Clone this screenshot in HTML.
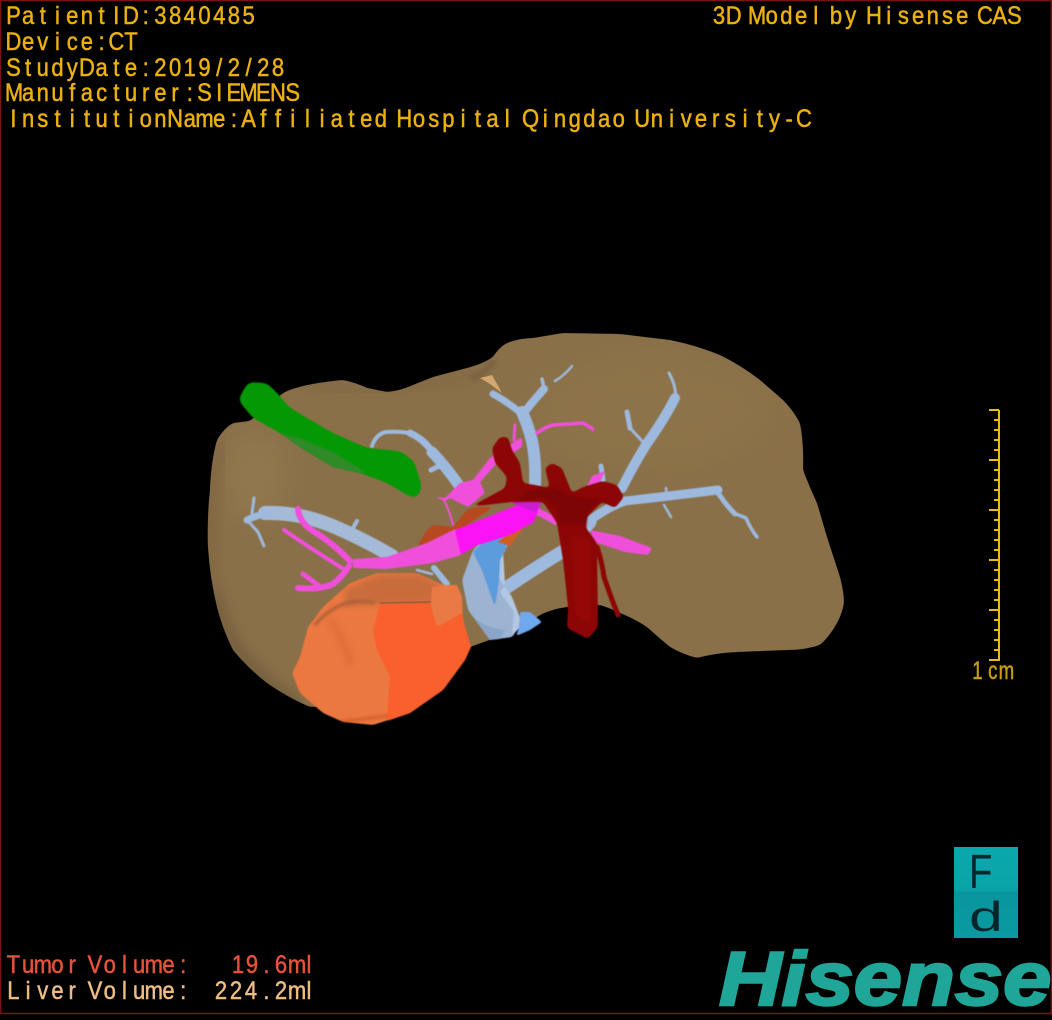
<!DOCTYPE html>
<html><head><meta charset="utf-8"><title>3D Model</title>
<style>
html,body{margin:0;padding:0;background:#000;width:1052px;height:1020px;overflow:hidden}
svg{display:block}
text{font-family:"Liberation Sans",sans-serif;white-space:pre}
.t{font-size:22px;text-anchor:middle;fill:#ecb10c;stroke:#ecb10c;stroke-width:.45}
</style></head><body>
<svg width="1052" height="1020" viewBox="0 0 1052 1020" xmlns="http://www.w3.org/2000/svg">
<defs>
<filter id="b1" color-interpolation-filters="sRGB" x="-30%" y="-30%" width="160%" height="160%"><feGaussianBlur stdDeviation="1.2"/></filter>
<filter id="b3" color-interpolation-filters="sRGB" x="-30%" y="-30%" width="160%" height="160%"><feGaussianBlur stdDeviation="3"/></filter>
<filter id="b6" color-interpolation-filters="sRGB" x="-30%" y="-30%" width="160%" height="160%"><feGaussianBlur stdDeviation="6"/></filter>
<filter id="b14" color-interpolation-filters="sRGB" x="-40%" y="-40%" width="180%" height="180%"><feGaussianBlur stdDeviation="14"/></filter>
<filter id="s" color-interpolation-filters="sRGB" x="-5%" y="-5%" width="110%" height="110%"><feGaussianBlur stdDeviation=".45"/></filter>
<filter id="r4" color-interpolation-filters="sRGB" x="-5%" y="-5%" width="110%" height="110%"><feGaussianBlur stdDeviation="4"/><feComponentTransfer><feFuncA type="linear" slope="10" intercept="-4.5"/></feComponentTransfer></filter>
<filter id="r2" color-interpolation-filters="sRGB" x="-10%" y="-10%" width="120%" height="120%"><feGaussianBlur stdDeviation="2"/><feComponentTransfer><feFuncA type="linear" slope="8" intercept="-3.5"/></feComponentTransfer></filter>
<filter id="r1" color-interpolation-filters="sRGB" x="-10%" y="-10%" width="120%" height="120%"><feGaussianBlur stdDeviation="1"/><feComponentTransfer><feFuncA type="linear" slope="6" intercept="-2.4"/></feComponentTransfer></filter>
<clipPath id="lc"><path d="M233 423L250 421L283 393Q300 384 343 380Q357 383 367 388L387 392Q400 391 413 385L433 377L467 368Q483 364 493 357Q499 347 507 343Q520 338 533 338L563 333L620 334L670 340Q695 345 720 355Q742 366 760 380L783 400Q793 410 800 423Q804 445 803 470Q810 488 817 503L827 537L840 577Q844 592 844 603Q842 614 837 623Q830 636 820 645Q805 650 787 650L737 652Q715 653 697 658Q682 654 670 647Q658 637 647 627Q633 618 620 613Q610 608 600 605Q582 604 567 607Q552 609 540 615L517 630L470 647L420 700L310 707Q287 697 267 683Q248 668 233 650Q223 630 217 607Q210 578 208 547Q207 518 210 490Q211 462 217 440Q224 428 233 423Z"/></clipPath>
<clipPath id="tc"><path d="M350 583L377 573L417 573L443 585L457 585L462 597L463 623L470 647L465 660L443 690L410 713L373 725L343 722L323 713L300 693L292 673L300 657L308 627L323 607Z"/></clipPath>
<linearGradient id="g1" x1="0" y1="0" x2="0" y2="1"><stop offset="0" stop-color="#0aa8ad"/><stop offset=".47" stop-color="#0aa4a8"/><stop offset=".5" stop-color="#0a959e"/><stop offset="1" stop-color="#0a9aa2"/></linearGradient>
</defs>

<rect width="1052" height="1020" fill="#000"/>
<rect x="0.5" y="0.5" width="1051" height="1013" fill="none" stroke="#7a1414" stroke-width="1.6"/>

<!-- liver -->
<path filter="url(#r2)" d="M233 423L250 421L283 393Q300 384 343 380Q357 383 367 388L387 392Q400 391 413 385L433 377L467 368Q483 364 493 357Q499 347 507 343Q520 338 533 338L563 333L620 334L670 340Q695 345 720 355Q742 366 760 380L783 400Q793 410 800 423Q804 445 803 470Q810 488 817 503L827 537L840 577Q844 592 844 603Q842 614 837 623Q830 636 820 645Q805 650 787 650L737 652Q715 653 697 658Q682 654 670 647Q658 637 647 627Q633 618 620 613Q610 608 600 605Q582 604 567 607Q552 609 540 615L517 630L470 647L420 700L310 707Q287 697 267 683Q248 668 233 650Q223 630 217 607Q210 578 208 547Q207 518 210 490Q211 462 217 440Q224 428 233 423Z" fill="#8a7049"/>
<g clip-path="url(#lc)">
  <ellipse cx="255" cy="475" rx="30" ry="45" fill="#92784f" filter="url(#b14)"/>
  <ellipse cx="650" cy="410" rx="120" ry="55" fill="#8d7349" filter="url(#b14)"/>
  <path d="M214 590Q225 660 300 705" fill="none" stroke="#6f5a3a" stroke-width="10" filter="url(#b6)"/>
  <path d="M222 440Q207 500 212 590" fill="none" stroke="#7b6441" stroke-width="8" filter="url(#b6)"/>
  <path d="M470 378Q482 378 494 360" fill="none" stroke="#6f5a39" stroke-width="4" filter="url(#b3)"/>
  <path d="M300 385Q400 395 470 372" fill="none" stroke="#7f6843" stroke-width="8" filter="url(#b6)"/>
</g>
<path d="M480 378L492 375L502 393L490 384Z" fill="#d2a870"/>

<g filter="url(#s)">
<!-- blue veins -->
<g fill="none" stroke="#9db9de" stroke-linecap="round" stroke-linejoin="round">
  <path d="M587 523Q605 508 625 501Q670 496 718 490" stroke-width="9"/>
  <path d="M716 490Q726 505 735 514" stroke-width="5"/>
  <path d="M736 514L746 518Q750 528 757 537" stroke-width="3.5"/>
  <path d="M667 497L666 488M664 505L671 517" stroke-width="2.5"/>
  <path d="M622 488Q635 462 648 442Q665 418 675 398" stroke-width="10"/>
  <path d="M676 400Q676 385 669 373" stroke-width="3"/>
  <path d="M643 442L630 428" stroke-width="3"/>
  <path d="M630 428L627 412" stroke-width="5"/>
  <path d="M603 480L601 466" stroke-width="5"/>
  <path d="M535 485Q536 460 532 441Q528 425 522 412" stroke-width="12"/>
  <path d="M522 414Q508 402 493 394" stroke-width="7"/>
  <path d="M523 414Q534 400 544 389" stroke-width="8"/>
  <path d="M544 388L542 379" stroke-width="3.5"/>
  <path d="M555 381Q565 375 572 366" stroke-width="2.5"/>
  <path d="M506 588Q535 568 565 550L590 522" stroke-width="13"/>
  <path d="M372 446Q376 434 386 432Q402 431 413 434" stroke-width="4"/>
  <path d="M410 433Q425 440 433 453" stroke-width="7"/>
  <path d="M432 452Q447 468 458 484" stroke-width="11"/>
  <path d="M431 470L443 464" stroke-width="5"/>
  <path d="M265 513Q300 512 335 527Q365 540 392 556" stroke="#a4bad6" stroke-width="14"/>
  <path d="M247 520Q257 515 268 513" stroke-width="7"/>
  <path d="M249 522L258 532L264 546" stroke-width="3"/>
  <path d="M252 513L254 498" stroke-width="3"/>
  <path d="M353 528L357 521" stroke-width="4"/>
  <path d="M417 570L432 574" stroke-width="2.5"/>
  <path d="M434 568L447 584" stroke-width="6"/>
</g>

<!-- IVC -->
<path filter="url(#r2)" d="M473 550L462 580L468 610L490 640L513 637L520 620L512 597L498 577L502 557L512 537L497 535L480 543Z" fill="#9cb3d2"/>
<path d="M468 610Q480 628 505 630L500 639L490 640Z" fill="#8ba5c8"/>
<path filter="url(#r1)" d="M503 550Q497 565 498 577L512 597L520 618L519 628L512 636L514 612L500 592L505 585Z" fill="#b2c7e3"/>
<path filter="url(#r1)" d="M520 612L530 612L542 622L530 630L516 636L520 625Z" fill="#6fa8ee"/>
<path filter="url(#r1)" d="M480 545L473 552L482 570L495 607L499 580L500 560L510 540L497 535Z" fill="#5c9bdc"/>

<!-- orange under portal -->
<path filter="url(#r1)" d="M417 546L427 530L433 525L453 527L467 510L477 507L493 507L460 530L427 543Z" fill="#b8481f"/>
<path d="M498 542L518 525L522 530L510 546Z" fill="#cf5f25"/>

<!-- pink -->
<g fill="none" stroke="#f04fdc" stroke-linecap="round" stroke-linejoin="round">
  <path d="M298 509Q299 522 313 531Q333 543 350 561" stroke-width="6"/>
  <path d="M284 530Q313 550 342 568" stroke-width="4"/>
  <path d="M298 588Q320 590 333 584Q343 576 349 566" stroke-width="6"/>
  <path d="M303 574L318 585" stroke-width="5"/>
  <path d="M444 500Q450 512 453 525" stroke-width="2"/>
  <path d="M514 440L515 425" stroke-width="3"/>
  <path d="M537 433Q545 427 553 425L583 423L593 429" stroke-width="3.5"/>
</g>
<path filter="url(#r1)" d="M430 496L445 498L460 483L473 480L490 458L522 437L522 447L497 463L480 482L485 493L468 507L450 498L445 501Z" fill="#f04fdc"/>
<path filter="url(#r1)" d="M537 507L555 517L557 526L535 514Z" fill="#f04fdc"/>
<path filter="url(#r1)" d="M590 530L620 536L652 548L648 555L625 552L595 542Z" fill="#f04fdc"/>
<path filter="url(#r1)" d="M353 559L387 557L427 543L453 530L461 528L461 555L433 563L387 569L353 568Z" fill="#ef4fdb"/>
<path filter="url(#r1)" d="M455 530L530 500L540 505L534 522L510 535L475 546L461 555Z" fill="#fb12f5"/>
<path d="M512 503L528 485L542 502L535 512Z" fill="#c81fd4"/>
<path d="M592 476L605 471L600 482L585 490Z" fill="#f04fdc"/>

<!-- dark red -->
<path filter="url(#r2)" d="M492 448L500 437L508 437L512 450L520 463L523 483L535 485L550 488L545 468L552 463L562 468L572 493L583 487L603 481L617 485L624 497L615 508L602 502L587 517L586 528L597 543L598 627L588 639L567 628L568 607L563 560L557 523L543 502L512 502L468 507L483 500L505 488L507 477L495 463Z" fill="#8d0606"/>
<path d="M515 502L543 497L557 510L560 522L586 526L587 513L600 500L575 497L553 488L530 490Z" fill="#7d0505" filter="url(#b1)"/>
<path d="M572 535L590 540L590 622L575 615Z" fill="#960808" filter="url(#b1)"/>
<path d="M597 547Q602 562 604 577Q610 595 618 615" fill="none" stroke="#8d0606" stroke-width="5" stroke-linecap="round"/>

<!-- green -->
<path filter="url(#r4)" d="M238 400L248 382L267 383L278 394L290 408L333 433L367 448L400 451L414 461L422 487L417 499L407 495L387 483L360 473L333 467L300 447L280 433L253 418Z" fill="#049804"/>
<path d="M280 433L300 438L333 452L367 473L360 473L333 467L300 447Z" fill="#2f8a28" filter="url(#s)"/>

<!-- tumor -->
<path filter="url(#r2)" d="M350 583L377 573L417 573L443 585L457 585L462 597L463 623L470 647L465 660L443 690L410 713L373 725L343 722L323 713L300 693L292 673L300 657L308 627L323 607Z" fill="#ea7840"/>
<g clip-path="url(#tc)">
  <path d="M345 590L380 574L420 574L440 585L432 603L380 604L345 607Z" fill="#c96c3c" filter="url(#b3)"/>
  <path d="M315 625Q340 595 375 603" fill="none" stroke="#ad5f36" stroke-width="3" filter="url(#b1)"/>
  <path d="M380 603L431 602" stroke="#7a4a30" stroke-width="1" fill="none"/>
  <path d="M330 620Q345 640 350 665" fill="none" stroke="#e06e3a" stroke-width="7" filter="url(#b3)"/>
  <path d="M340 722L410 713" fill="none" stroke="#d65e2b" stroke-width="3" filter="url(#b1)"/>
  <path d="M432 587L457 585L462 597L463 611L437 627L431 605Z" fill="#ea7a45"/>
</g>
<path filter="url(#r1)" d="M380 605L430 603L437 627L462 613L464 623L471 647L465 660L443 690L410 713L387 721L390 677L377 650L373 630Z" fill="#f9602d"/>
</g>

<!-- text top-left -->
<text class="t" transform="translate(0,24) scale(1,1.12)" x="13.4 28.1 42.8 57.5 72.2 86.9 101.6 116.3 131 145.7 160.4 175.1 189.8 204.5 219.2 233.9 248.6" y="0">PatientID:3840485</text>
<text class="t" transform="translate(0,50) scale(1,1.12)" x="13.4 28.1 42.8 57.5 72.2 86.9 101.6 116.3 131" y="0">Device:CT</text>
<text class="t" transform="translate(0,76) scale(1,1.12)" x="13.4 28.1 42.8 57.5 72.2 86.9 101.6 116.3 131 145.7 160.4 175.1 189.8 204.5 219.2 233.9 248.6 263.3 278" y="0">StudyDate:2019/2/28</text>
<text class="t" transform="translate(0,101) scale(1,1.12)" x="14 28.1 42.8 57.5 72.2 86.9 101.6 116.3 131 145.7 160.4 175.1 189.8 204.5 219.2 233.9 248.6 263.3 278 292.7" y="0">Manufacturer:SIEMENS</text>
<text class="t" transform="translate(0,127) scale(1,1.12)" x="13.4 28.1 42.8 57.5 72.2 86.9 101.6 116.3 131 145.7 160.4 175.1 189.8 204.5 219.2 233.9 248.6 263.3 278 292.7 307.4 322.1 336.8 351.5 366.2 380.9 392 404.3 419 433.7 448.4 463.1 477.8 492.5 507.2 519 530.6 545.3 560 574.7 589.4 604.1 618.8 630 642.2 656.9 671.6 686.3 701 715.7 730.4 745.1 759.8 774.5 789.2 803.9" y="0">InstitutionName:Affiliated Hospital Qingdao University-C</text>

<!-- text top-right -->
<text class="t" transform="translate(0,24) scale(1,1.12)" x="719 733.7 745 757 771.7 786.4 801.1 815.8 827 836 850.7 862 874 888.7 903.4 918.1 932.8 947.5 962.2 974 985 999.7 1014.4" y="0">3D Model by Hisense CAS</text>

<!-- volumes -->
<text class="t" style="fill:#e6533a;stroke:#e6533a" transform="translate(0,973) scale(1,1.12)" x="13.4 28.1 42.8 57.5 72.2 83 95 109.7 124.4 139.1 153.8 168.5 183.2 195 205 218 238 252 266.5 281 297 309" y="0">Tumor Volume:   19.6ml</text>
<text class="t" style="fill:#eebd84;stroke:#eebd84" transform="translate(0,999) scale(1,1.12)" x="13.4 28.1 42.8 57.5 72.2 83 95 109.7 124.4 139.1 153.8 168.5 183.2 198 207 221 236 251 266.5 281 297 309" y="0">Liver Volume:  224.2ml</text>

<!-- scale bar -->
<g fill="#f0b818">
  <rect x="998" y="410" width="2" height="251"/>
  <rect x="989" y="409" width="10" height="2"/><rect x="989" y="459" width="10" height="2"/><rect x="989" y="509" width="10" height="2"/><rect x="989" y="559" width="10" height="2"/><rect x="989" y="609" width="10" height="2"/><rect x="989" y="659" width="10" height="2"/>
  <rect x="994" y="419" width="4" height="2"/><rect x="994" y="429" width="4" height="2"/><rect x="994" y="439" width="4" height="2"/><rect x="994" y="449" width="4" height="2"/>
  <rect x="994" y="469" width="4" height="2"/><rect x="994" y="479" width="4" height="2"/><rect x="994" y="489" width="4" height="2"/><rect x="994" y="499" width="4" height="2"/>
  <rect x="994" y="519" width="4" height="2"/><rect x="994" y="529" width="4" height="2"/><rect x="994" y="539" width="4" height="2"/><rect x="994" y="549" width="4" height="2"/>
  <rect x="994" y="569" width="4" height="2"/><rect x="994" y="579" width="4" height="2"/><rect x="994" y="589" width="4" height="2"/><rect x="994" y="599" width="4" height="2"/>
  <rect x="994" y="619" width="4" height="2"/><rect x="994" y="629" width="4" height="2"/><rect x="994" y="639" width="4" height="2"/><rect x="994" y="649" width="4" height="2"/>
</g>
<text class="t" style="fill:#c89c12;stroke:#c89c12" transform="translate(0,679) scale(.85,1.12)" x="1150 1168 1184" y="0">1cm</text>

<!-- orientation cube -->
<rect x="954" y="847" width="64" height="91" fill="url(#g1)"/>
<text transform="translate(969,888) scale(.8,1)" x="0" y="0" font-size="48" fill="#06262c">F</text>
<text transform="translate(969,931) scale(1.45,1)" x="0" y="0" font-size="42" fill="#06262c">d</text>

<!-- Hisense logo -->
<text transform="translate(719,1005) scale(1.14,1)" x="0" y="0" font-size="76" font-weight="700" font-style="italic" fill="#1fa698" stroke="#1fa698" stroke-width="2.4">Hisense</text>
</svg>
</body></html>
